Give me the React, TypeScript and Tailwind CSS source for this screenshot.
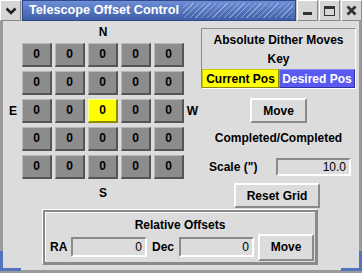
const rows = [0, 1, 2, 3, 4];
const cols = [0, 1, 2, 3, 4];

function Cell({ active }: { active?: boolean }) {
  return (
    <div
      className={`w-[30px] h-[24px] flex items-center justify-center border-t border-l border-b-2 border-r-2 ${
        active
          ? 'bg-[#ffff00] border-t-[#ffff90] border-l-[#ffff90] border-b-[#8b8b00] border-r-[#8b8b00]'
          : 'bg-[#8c8c8c] border-t-[#b8b8b8] border-l-[#b8b8b8] border-b-[#555555] border-r-[#555555]'
      }`}
    >
      0
    </div>
  );
}

function RaisedButton({ label, className }: { label: string; className: string }) {
  return (
    <div
      className={`flex items-center justify-center bg-[#dcdcdc] border-2 border-t-white border-l-white border-b-[#8a8a8a] border-r-[#8a8a8a] ${className}`}
    >
      {label}
    </div>
  );
}

function Field({ value, className }: { value: string; className: string }) {
  return (
    <div
      className={`flex items-center justify-end pr-[3px] font-normal bg-[#dcdcdc] border-2 border-t-[#8a8a8a] border-l-[#8a8a8a] border-b-white border-r-white ${className}`}
    >
      {value}
    </div>
  );
}

function TitleButton({ children }: { children: React.ReactNode }) {
  return (
    <div className="w-[21px] h-[21px] flex items-center justify-center bg-[#d6d6d6] border border-t-white border-l-white border-b-[#8a8a8a] border-r-[#8a8a8a]">
      {children}
    </div>
  );
}

export default function App() {
  return (
    <div className="relative w-[362px] h-[273px] bg-[#dcdcdc] overflow-hidden flex flex-col font-['Liberation_Sans',Arial,sans-serif] text-[12px] font-bold text-black leading-none">
      {/* title bar */}
      <div className="flex h-[21px] gap-[1px] bg-[#c8c8c8]">
        <TitleButton>
          <svg width="12" height="8" viewBox="0 0 12 8">
            <path d="M1.5 1.5 L6 6 L10.5 1.5" fill="none" stroke="#222" strokeWidth="2.6" />
          </svg>
        </TitleButton>
        <div className="flex-1 flex items-center bg-gradient-to-b from-[#6d8ed6] to-[#3f5fa8] border border-[#2e4a8c]">
          <span className="pl-[6px] pr-[4px] text-white text-[12.7px]">Telescope Offset Control</span>
          <div className="flex-1 self-stretch my-[2px] mr-[2px] bg-[repeating-linear-gradient(135deg,transparent_0_3px,rgba(255,255,255,0.35)_3px_4px)]" />
        </div>
        <TitleButton>
          <div className="w-[9px] h-[3px] bg-[#333] mt-[6px]" />
        </TitleButton>
        <TitleButton>
          <div className="w-[11px] h-[10px] border border-[#333] border-t-[3px]" />
        </TitleButton>
        <TitleButton>
          <svg width="11" height="11" viewBox="0 0 11 11">
            <path d="M1.5 1.5 L9.5 9.5 M9.5 1.5 L1.5 9.5" stroke="#333" strokeWidth="2.8" />
          </svg>
        </TitleButton>
      </div>

      {/* body */}
      <div className="flex-1 flex flex-col border-l-[3px] border-r-[3px] border-b-[3px] border-l-[#9a9a9a] border-r-[#9a9a9a] border-b-[#9a9a9a]">
        <div className="flex h-[187px]">
          {/* grid */}
          <div className="w-[198px] flex flex-col">
            <div className="h-[22px] ml-[19px] w-[162px] flex items-center justify-center">N</div>
            <div className="flex flex-col gap-[4px]">
              {rows.map((r) => (
                <div key={r} className="flex items-center">
                  <div className="w-[19px] text-center pl-[1px]">{r === 2 ? 'E' : ''}</div>
                  <div className="flex gap-[3px]">
                    {cols.map((c) => (
                      <Cell key={c} active={r === 2 && c === 2} />
                    ))}
                  </div>
                  <div className="flex-1 text-center">{r === 2 ? 'W' : ''}</div>
                </div>
              ))}
            </div>
            <div className="h-[30px] ml-[19px] w-[162px] flex items-center justify-center">S</div>
          </div>

          {/* right column */}
          <div className="w-[155px] flex flex-col">
            <div className="mt-[7px] h-[61px] border border-[#8c8c8c] border-b-white border-r-white flex flex-col">
              <div className="h-[20px] flex items-center justify-center pt-[1px]">Absolute Dither Moves</div>
              <div className="h-[20px] flex items-center justify-center">Key</div>
              <div className="flex h-[19px]">
                <div className="w-[77px] bg-[#ffff00] flex items-center justify-center border border-[#c8c800] border-b-[#8b8b00] border-r-[#8b8b00]">
                  Current Pos
                </div>
                <div className="flex-1 bg-[#5a5af2] text-white flex items-center justify-center border border-[#8a8aff] border-b-[#3030a0] border-r-[#3030a0]">
                  Desired Pos
                </div>
              </div>
            </div>
            <RaisedButton label="Move" className="mt-[9px] h-[25px] w-[57px] mx-auto" />
            <div className="mt-[8px] h-[14px] flex items-center justify-center">Completed/Completed</div>
            <div className="mt-[13px] h-[18px] flex items-center pl-[8px] pr-[5px]">
              <span>Scale (")</span>
              <Field value="10.0" className="ml-auto w-[75px] h-[18px]" />
            </div>
            <RaisedButton label="Reset Grid" className="mt-[7px] h-[25px] w-[86px] ml-[33px]" />
          </div>
        </div>

        {/* relative offsets */}
        <div className="mt-[1px] ml-[39px] w-[276px] border border-t-white border-l-white border-b-[#8a8a8a] border-r-[#8a8a8a]">
          <div className="border-2 border-[#8a8a8a]">
            <div className="border border-t-white border-l-white border-b-[#dcdcdc] border-r-[#dcdcdc] flex flex-col">
              <div className="h-[20px] flex items-center justify-center pt-[3px]">Relative Offsets</div>
              <div className="h-[28px] flex items-center pl-[4px]">
                <span className="w-[17px]">RA</span>
                <Field value="0" className="ml-[4px] w-[76px] h-[20px]" />
                <span className="ml-[5px]">Dec</span>
                <Field value="0" className="ml-[5px] w-[75px] h-[20px]" />
                <RaisedButton label="Move" className="ml-[4px] w-[56px] h-[27px]" />
              </div>
            </div>
          </div>
        </div>
      </div>

      {/* focus corners */}
      <div className="absolute left-0 bottom-[2px] w-[3px] h-[20px] bg-[#5274c0]" />
      <div className="absolute left-0 bottom-[2px] w-[21px] h-[3px] bg-[#5274c0]" />
      <div className="absolute right-0 bottom-[2px] w-[3px] h-[20px] bg-[#5274c0]" />
      <div className="absolute right-0 bottom-[2px] w-[21px] h-[3px] bg-[#5274c0]" />
    </div>
  );
}
